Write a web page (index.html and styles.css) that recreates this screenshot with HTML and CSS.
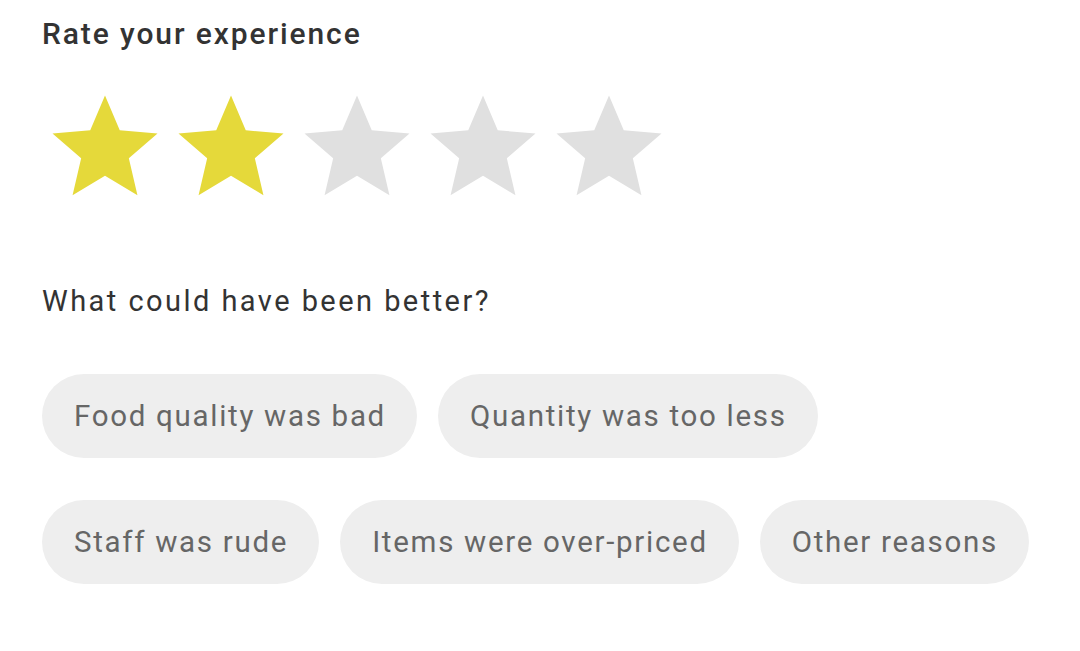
FILE: index.html
```html
<!DOCTYPE html>
<html>
<head>
<meta charset="utf-8">
<link rel="stylesheet" href="styles.css">
</head>
<body>
<main class="page">
  <h1 class="title">Rate your experience</h1>
  <div class="stars">
    <svg class="star on" viewBox="0 0 24 24"><path d="M12 17.27L18.18 21l-1.64-7.03L22 9.24l-7.19-.61L12 2 9.19 8.63 2 9.24l5.46 4.73L5.82 21z"/></svg>
    <svg class="star on" viewBox="0 0 24 24"><path d="M12 17.27L18.18 21l-1.64-7.03L22 9.24l-7.19-.61L12 2 9.19 8.63 2 9.24l5.46 4.73L5.82 21z"/></svg>
    <svg class="star" viewBox="0 0 24 24"><path d="M12 17.27L18.18 21l-1.64-7.03L22 9.24l-7.19-.61L12 2 9.19 8.63 2 9.24l5.46 4.73L5.82 21z"/></svg>
    <svg class="star" viewBox="0 0 24 24"><path d="M12 17.27L18.18 21l-1.64-7.03L22 9.24l-7.19-.61L12 2 9.19 8.63 2 9.24l5.46 4.73L5.82 21z"/></svg>
    <svg class="star" viewBox="0 0 24 24"><path d="M12 17.27L18.18 21l-1.64-7.03L22 9.24l-7.19-.61L12 2 9.19 8.63 2 9.24l5.46 4.73L5.82 21z"/></svg>
  </div>
  <p class="question">What could have been better?</p>
  <div class="chips">
    <span class="chip">Food quality was bad</span>
    <span class="chip">Quantity was too less</span>
    <span class="chip">Staff was rude</span>
    <span class="chip">Items were over-priced</span>
    <span class="chip">Other reasons</span>
  </div>
</main>
</body>
</html>
```
FILE: styles.css
```css
html, body {
  margin: 0;
  padding: 0;
  background: #ffffff;
}
.page {
  font-family: Roboto, "Noto Sans", sans-serif;
  padding: 14px 0 0 42px;
  width: 1000px;
}
.title {
  margin: 0;
  font-size: 30px;
  font-weight: 500;
  line-height: 40px;
  color: #333333;
  letter-spacing: 1.9px;
}
.stars {
  display: flex;
  margin-top: 31px;
  height: 126px;
}
.star {
  width: 126px;
  height: 126px;
  fill: #e0e0e0;
}
.star.on {
  fill: #e5d93a;
}
.question {
  margin: 70px 0 0 0;
  font-size: 29px;
  line-height: 40px;
  color: #333333;
  letter-spacing: 2.45px;
}
.chips {
  display: flex;
  flex-wrap: wrap;
  column-gap: 21px;
  row-gap: 42px;
  margin-top: 53px;
  width: 1000px;
}
.chip {
  display: inline-flex;
  align-items: center;
  height: 84px;
  padding: 0 31px 0 32px;
  border-radius: 42px;
  background: #eeeeee;
  color: #666666;
  font-size: 29.5px;
  letter-spacing: 1.7px;
}
```
